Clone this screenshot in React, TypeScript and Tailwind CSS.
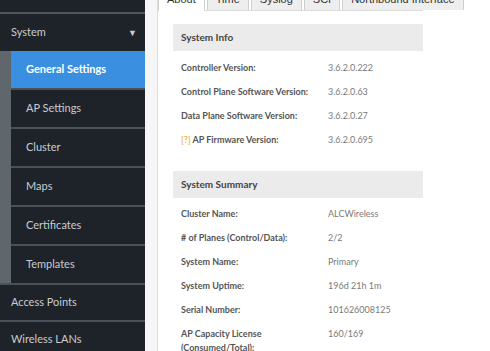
const subItems = ["General Settings", "AP Settings", "Cluster", "Maps", "Certificates", "Templates"];

const tabs = ["About", "Time", "Syslog", "SCI", "Northbound Interface"];

const info: [string, string][] = [
  ["Controller Version:", "3.6.2.0.222"],
  ["Control Plane Software Version:", "3.6.2.0.63"],
  ["Data Plane Software Version:", "3.6.2.0.27"],
];

const summary: [string, string][] = [
  ["Cluster Name:", "ALCWireless"],
  ["# of Planes (Control/Data):", "2/2"],
  ["System Name:", "Primary"],
  ["System Uptime:", "196d 21h 1m"],
  ["Serial Number:", "101626008125"],
];

function Sep() {
  return <div className="h-[2px] bg-[#4b5159]" />;
}

function Row({ label, value }: { label: React.ReactNode; value: string }) {
  return (
    <div className="flex h-[24px] items-center pl-[8px]">
      <div className="w-[147px] shrink-0 text-[9px] font-bold text-[#555]">{label}</div>
      <div className="text-[9px] text-[#7a7a7a]">{value}</div>
    </div>
  );
}

function Header({ title }: { title: string }) {
  return (
    <div className="flex h-[27px] items-center bg-[#ebebeb] px-[8px] text-[10px] font-bold text-[#444]">
      {title}
    </div>
  );
}

export default function App() {
  return (
    <div className="flex h-[351px] w-[490px] overflow-hidden bg-white font-['Lato',sans-serif]">
      <aside className="w-[145px] shrink-0 overflow-hidden bg-[#1e232a] text-[11px] text-[#c9ccd1]">
        <div className="h-[12px]" />
        <div className="h-[2px] bg-[#50565d]" />
        <div className="flex h-[37px] items-center justify-between pl-[11px] pr-[8px]">
          <span>System</span>
          <span className="text-[9px] text-[#c9ccd1]">▼</span>
        </div>
        <div className="flex">
          <div className="w-[11px] bg-[#5f666c]" />
          <div className="flex-1">
            {subItems.map((s, i) => (
              <div key={s}>
                <div
                  className={
                    i === 0
                      ? "flex h-[37px] items-center bg-[#3b8fe0] pl-[15px] font-bold text-white"
                      : "flex h-[37px] items-center pl-[15px]"
                  }
                >
                  {s}
                </div>
                {i < subItems.length - 1 && <Sep />}
              </div>
            ))}
          </div>
        </div>
        <Sep />
        <div className="flex h-[35px] items-center pl-[11px]">Access Points</div>
        <Sep />
        <div className="flex h-[35px] items-center pl-[11px]">Wireless LANs</div>
      </aside>

      <div className="w-[13px] shrink-0 border-r border-[#dedede] bg-[#f6f6f6]" />

      <main className="flex-1 bg-white">
        <div className="-mt-[15px] flex w-[265px] gap-[2px] border-b border-[#dcdcdc] font-['Liberation_Sans',Arial,sans-serif] text-[11px] leading-[15px] text-[#333]">
          {tabs.map((t, i) => (
            <div
              key={t}
              className={
                i === 0
                  ? "-mb-px whitespace-nowrap rounded-t-[3px] border border-[#cfcfcf] border-b-white bg-white px-[8px] pb-[3px] pt-[6px]"
                  : "whitespace-nowrap rounded-t-[3px] border border-b-0 border-[#cfcfcf] bg-[#eeeeee] px-[8px] pb-[3px] pt-[6px]"
              }
            >
              {t}
            </div>
          ))}
        </div>

        <div className="mt-[13px] w-[265px] pl-[15px]">
          <Header title="System Info" />
          <div className="pt-[5px]">
            {info.map(([l, v]) => (
              <Row key={l} label={l} value={v} />
            ))}
            <Row
              label={
                <>
                  <span className="font-normal text-[#e8a33c]">[?]</span> AP Firmware Version:
                </>
              }
              value="3.6.2.0.695"
            />
          </div>

          <div className="mt-[19px]">
            <Header title="System Summary" />
          </div>
          <div className="pt-[4px]">
            {summary.map(([l, v]) => (
              <Row key={l} label={l} value={v} />
            ))}
            <div className="flex pl-[8px] pt-[5px] leading-[14px]">
              <div className="w-[147px] shrink-0 text-[9px] font-bold text-[#555]">
                AP Capacity License
                <br />
                (Consumed/Total):
              </div>
              <div className="text-[9px] text-[#7a7a7a]">160/169</div>
            </div>
          </div>
        </div>
      </main>
    </div>
  );
}
